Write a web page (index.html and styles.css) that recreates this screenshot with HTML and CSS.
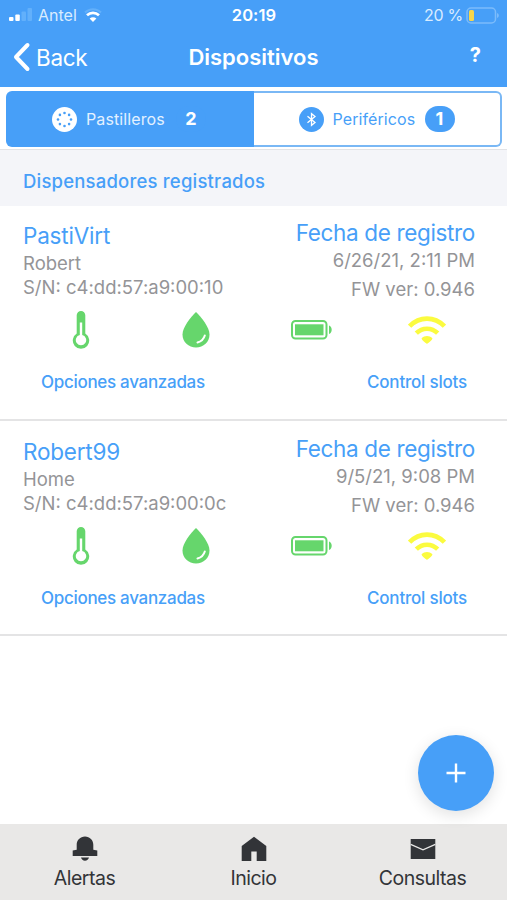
FILE: index.html
```html
<!DOCTYPE html>
<html lang="es">
  <head>
    <meta charset="UTF-8" />
    <meta name="viewport" content="width=device-width, initial-scale=1.0" />
    <title>Dispositivos</title>

    <link rel="stylesheet" href="styles.css">
  </head>
  <body>
    <!-- icons shared by the device cards -->
    <svg class="sprite">
      <symbol id="thermometer" viewBox="0 0 18 38">
        <path fill="#66d66c" d="M9 0a4.300 4.300 0 0 1 4.300 4.300v18.300a8.200 8.200 0 1 1-8.600 0V4.300A4.300 4.300 0 0 1 9 0z" />
        <path fill="#fff" d="M7.800 11.500h2.400v12.600a5.200 5.200 0 1 1-2.400 0z" />
      </symbol>
      <symbol id="drop" viewBox="0 0 28 36">
        <path fill="#66d66c" d="M14 0C19 5 27.500 15 27.500 22.500 27.500 30 21.500 35.500 14 35.500S.5 30 .5 22.500C.5 15 9 5 14 0z" />
        <path fill="none" stroke="#fff" stroke-width="2" stroke-linecap="round" d="M15.500 30.500c3.800-1 6.300-3.500 7.300-7" />
      </symbol>
      <symbol id="battery" viewBox="0 0 41 20">
        <rect x="1" y="1" width="34.500" height="17.500" rx="3.500" fill="none" stroke="#66d66c" stroke-width="2" />
        <rect x="4" y="4.300" width="28.500" height="11" fill="#66d66c" />
        <path fill="#66d66c" d="M38 5.500c1.500.5 2.700 2 2.700 4.300S39.500 13.600 38 14z" />
      </symbol>
      <symbol id="wifi" viewBox="0 0 38 28">
        <g fill="none" stroke="#fbfb3f" stroke-width="4.600">
          <path d="M1.600 10.200C11.500.1 26.500.1 36.400 10.200" />
          <path d="M8.300 17.200c6-6 15.400-6 21.400 0" />
        </g>
        <path fill="#fbfb3f" d="M13.600 22.200c3-2.900 7.800-2.900 10.800 0 0 2-3.500 4-5.400 5.800-1.900-1.800-5.400-3.800-5.400-5.800z" />
      </symbol>
    </svg>

    <div class="wrapper">
      <header>
        <div class="status">
          <div class="carrier">
            <svg width="23" height="14" viewBox="0 0 23 14">
              <rect x="0" y="9" width="4.500" height="4" rx="1" fill="#fff" />
              <rect x="6.300" y="6.500" width="4.500" height="6.500" rx="1" fill="#fff" />
              <rect x="12.500" y="3.500" width="4.500" height="9.500" rx="1" fill="#62b0fb" />
              <rect x="18.500" y="0" width="4.500" height="13" rx="1" fill="#62b0fb" />
            </svg>
            <span>Antel</span>
            <svg width="18" height="14" viewBox="0 0 18 14">
              <path fill="none" stroke="#62b0fb" stroke-width="2" d="M1 4.500c4.500-4.300 11.500-4.300 16 0" />
              <path fill="none" stroke="#fff" stroke-width="2.800" d="M3 7.300c3.500-3.200 8.500-3.200 12 0" />
              <path fill="#fff" d="M5.600 10.600c2-1.700 4.800-1.700 6.800 0L9 14z" />
            </svg>
          </div>
          <div class="time">20:19</div>
          <div class="power">
            <span>20 %</span>
            <svg width="33" height="17" viewBox="0 0 33 17">
              <rect x="1" y="1" width="28.500" height="15" rx="4" fill="none" stroke="#7cbcfb" stroke-width="1.500" />
              <rect x="3" y="3" width="5" height="11" rx="1.500" fill="#f7d64a" />
              <path fill="#7cbcfb" d="M31 6c1.300.4 1.800 1.300 1.800 2.500S32.300 10.600 31 11z" />
            </svg>
          </div>
        </div>
        <div class="nav">
          <a class="back">
            <svg width="18" height="30" viewBox="0 0 18 30">
              <path fill="none" stroke="#fff" stroke-width="4" stroke-linecap="round" stroke-linejoin="round" d="M14.500 3 3 15l11.500 12" />
            </svg>
            <span>Back</span>
          </a>
          <h1>Dispositivos</h1>
          <a class="help">?</a>
        </div>
      </header>

      <div class="segment">
        <div class="tab active">
          <svg width="25" height="25" viewBox="0 0 25 25">
            <circle cx="12.500" cy="12.500" r="12.500" fill="#fff" />
            <g fill="#479ff8">
              <circle cx="12.500" cy="6" r="1.300" />
              <circle cx="17.100" cy="7.900" r="1.300" />
              <circle cx="19" cy="12.500" r="1.300" />
              <circle cx="17.100" cy="17.100" r="1.300" />
              <circle cx="12.500" cy="19" r="1.300" />
              <circle cx="7.900" cy="17.100" r="1.300" />
              <circle cx="6" cy="12.500" r="1.300" />
              <circle cx="7.900" cy="7.900" r="1.300" />
            </g>
          </svg>
          <span class="tab_name">Pastilleros</span>
          <span class="badge">2</span>
        </div>
        <div class="tab">
          <svg width="25" height="25" viewBox="0 0 25 25">
            <circle cx="12.500" cy="12.500" r="12.500" fill="#479ff8" />
            <path fill="none" stroke="#fff" stroke-width="1.300" d="M8.500 9.300l7.500 6.200-3.500 2.800V6.700L16 9.500l-7.500 6.200" />
          </svg>
          <span class="tab_name">Periféricos</span>
          <span class="badge">1</span>
        </div>
      </div>

      <h2>Dispensadores registrados</h2>

      <div class="device">
        <div class="info">
          <div class="left">
            <h3>PastiVirt</h3>
            <p class="owner">Robert</p>
            <p class="serial">S/N: c4:dd:57:a9:00:10</p>
          </div>
          <div class="right">
            <h3>Fecha de registro</h3>
            <p class="date">6/26/21, 2:11 PM</p>
            <p class="version">FW ver: 0.946</p>
          </div>
        </div>
        <div class="icons">
          <svg width="18" height="38"><use href="#thermometer" /></svg>
          <svg width="28" height="36"><use href="#drop" /></svg>
          <svg width="41" height="20"><use href="#battery" /></svg>
          <svg width="38" height="28"><use href="#wifi" /></svg>
        </div>
        <div class="links">
          <a class="options">Opciones avanzadas</a>
          <a class="slots">Control slots</a>
        </div>
      </div>

      <div class="device">
        <div class="info">
          <div class="left">
            <h3>Robert99</h3>
            <p class="owner">Home</p>
            <p class="serial">S/N: c4:dd:57:a9:00:0c</p>
          </div>
          <div class="right">
            <h3>Fecha de registro</h3>
            <p class="date">9/5/21, 9:08 PM</p>
            <p class="version">FW ver: 0.946</p>
          </div>
        </div>
        <div class="icons">
          <svg width="18" height="38"><use href="#thermometer" /></svg>
          <svg width="28" height="36"><use href="#drop" /></svg>
          <svg width="41" height="20"><use href="#battery" /></svg>
          <svg width="38" height="28"><use href="#wifi" /></svg>
        </div>
        <div class="links">
          <a class="options">Opciones avanzadas</a>
          <a class="slots">Control slots</a>
        </div>
      </div>

      <a class="add">
        <svg width="20" height="20" viewBox="0 0 20 20">
          <path stroke="#fff" stroke-width="2.400" d="M10 .5v19M.5 10h19" />
        </svg>
      </a>

      <footer>
        <a>
          <svg width="26" height="26" viewBox="0 0 26 26">
            <path fill="#323438" d="M13 .5c4.800 0 8.300 3.600 8.300 8.300v5l4 .7V20H.7v-5.500l4-.7v-5C4.700 4.100 8.200.5 13 .5zM9 21.500h8c-.5 2-2 3.200-4 3.200s-3.500-1.200-4-3.200z" />
          </svg>
          <span>Alertas</span>
        </a>
        <a>
          <svg width="26" height="26" viewBox="0 0 26 26">
            <path fill="#323438" d="M13 .8 25.300 10v15h-9.600V15.500h-5.400V25H.7V10z" />
          </svg>
          <span>Inicio</span>
        </a>
        <a>
          <svg width="26" height="26" viewBox="0 0 26 26">
            <path fill="#323438" d="M.7 3h24.600v20H.7z" />
            <path fill="none" stroke="#e9e8e7" stroke-width="1.300" d="M.7 8.300 13 13.800l12.300-5.500" />
          </svg>
          <span>Consultas</span>
        </a>
      </footer>
    </div>
  </body>
</html>
```
FILE: styles.css
```css
body {
  margin: 0;
  background: #fff;
  font-family: Inter, "Liberation Sans", sans-serif;
  color: #949497;
}

h1,
h2,
h3,
p {
  margin: 0;
}

svg {
  display: block;
  flex: none;
}

.sprite {
  display: none;
}

.wrapper {
  display: flex;
  flex-direction: column;
  height: 900px;
  position: relative;
  overflow: hidden;
}

header {
  height: 87px;
  background: #479ff8;
  color: #fff;
}

.status {
  display: grid;
  grid-template-columns: 1fr 1fr 1fr;
  align-items: center;
  height: 30px;
  padding: 0 8px 0 9px;
  font-size: 16px;
}

.carrier,
.power {
  display: flex;
  align-items: center;
  color: #d9ecff;
}

.carrier {
  gap: 6px;
}

.carrier span {
  width: 40px;
}

.time {
  text-align: center;
  font-size: 16.5px;
  font-weight: 600;
  letter-spacing: 0.1px;
}

.power {
  justify-content: flex-end;
  gap: 3px;
}

.power span {
  letter-spacing: -0.3px;
}

.nav {
  display: grid;
  grid-template-columns: 1fr 2fr 1fr;
  align-items: center;
  height: 54px;
  padding: 0 26px 0 13px;
}

.back {
  display: flex;
  align-items: center;
  gap: 5px;
  font-size: 22.5px;
  letter-spacing: -0.3px;
  padding-bottom: 1px;
}

h1 {
  text-align: center;
  font-size: 22px;
  font-weight: 600;
  line-height: 55px;
  padding-left: 13px;
}

.help {
  text-align: right;
  font-size: 20px;
  font-weight: 700;
  padding-bottom: 5px;
}

.segment {
  display: flex;
  height: 63px;
  padding: 4px 5px 3px 6px;
  box-sizing: border-box;
  border-bottom: 1px solid #e2e3e6;
}

.tab {
  flex: 1;
  display: flex;
  align-items: center;
  height: 56px;
  padding-left: 45px;
  box-sizing: border-box;
  border: 2px solid #7ab8f5;
  border-left: 0;
  border-radius: 0 6px 6px 0;
  color: #479ff8;
}

.tab.active {
  padding-left: 46px;
  border: 0;
  border-radius: 6px 0 0 6px;
  background: #479ff8;
  color: #e3f1ff;
}

.tab_name {
  width: 82px;
  margin-left: 9px;
  font-size: 16px;
  letter-spacing: 0.1px;
  white-space: nowrap;
}

.badge {
  width: 30px;
  height: 26px;
  margin-left: 10px;
  border-radius: 13px;
  background: #479ff8;
  color: #fff;
  text-align: center;
  font-size: 18px;
  font-weight: 700;
  line-height: 26px;
}

.active .badge {
  margin-left: 8px;
}

h2 {
  height: 56px;
  padding: 3px 23px 0;
  box-sizing: border-box;
  background: #f4f5f9;
  color: #479ff8;
  font-size: 18.5px;
  font-weight: 500;
  line-height: 57px;
  letter-spacing: 0.2px;
}

.device {
  height: 215px;
  padding-left: 23px;
  box-sizing: border-box;
  border-bottom: 2px solid #e4e4e5;
}

.device + .device {
  padding-top: 1px;
}

.info {
  display: flex;
  justify-content: space-between;
  height: 104px;
  padding-right: 32px;
  font-size: 18.5px;
}

.left {
  padding-top: 16px;
}

.right {
  padding-top: 13px;
  text-align: right;
}

h3 {
  color: #479ff8;
  font-size: 22.5px;
  font-weight: 400;
  line-height: 28px;
  letter-spacing: -0.2px;
}

.right h3 {
  letter-spacing: -0.35px;
}

.owner,
.serial {
  line-height: 24px;
}

.owner {
  padding-top: 1px;
}

.date {
  line-height: 26px;
}

.version {
  line-height: 32px;
}

.icons {
  display: grid;
  grid-template-columns: repeat(4, 1fr);
  place-items: center;
  height: 40px;
  padding-right: 22px;
}

.links {
  display: flex;
  justify-content: space-between;
  padding: 20px 40px 0 18px;
  color: #479ff8;
  font-size: 17px;
  font-weight: 500;
  line-height: 24px;
  letter-spacing: -0.3px;
}

.slots {
  letter-spacing: -0.2px;
}

.add {
  position: absolute;
  right: 13px;
  top: 735px;
  width: 76px;
  height: 76px;
  display: flex;
  align-items: center;
  justify-content: center;
  border-radius: 50%;
  background: #479ff8;
  box-shadow: 0 4px 16px rgba(0, 0, 0, 0.12);
}

footer {
  display: grid;
  grid-template-columns: repeat(3, 1fr);
  height: 76px;
  margin-top: auto;
  background: #e9e8e7;
  color: #323438;
  font-size: 19.5px;
}

footer a {
  display: flex;
  flex-direction: column;
  align-items: center;
  padding-top: 12px;
}

footer span {
  margin-top: 4px;
  line-height: 24px;
  letter-spacing: -0.5px;
}
```
